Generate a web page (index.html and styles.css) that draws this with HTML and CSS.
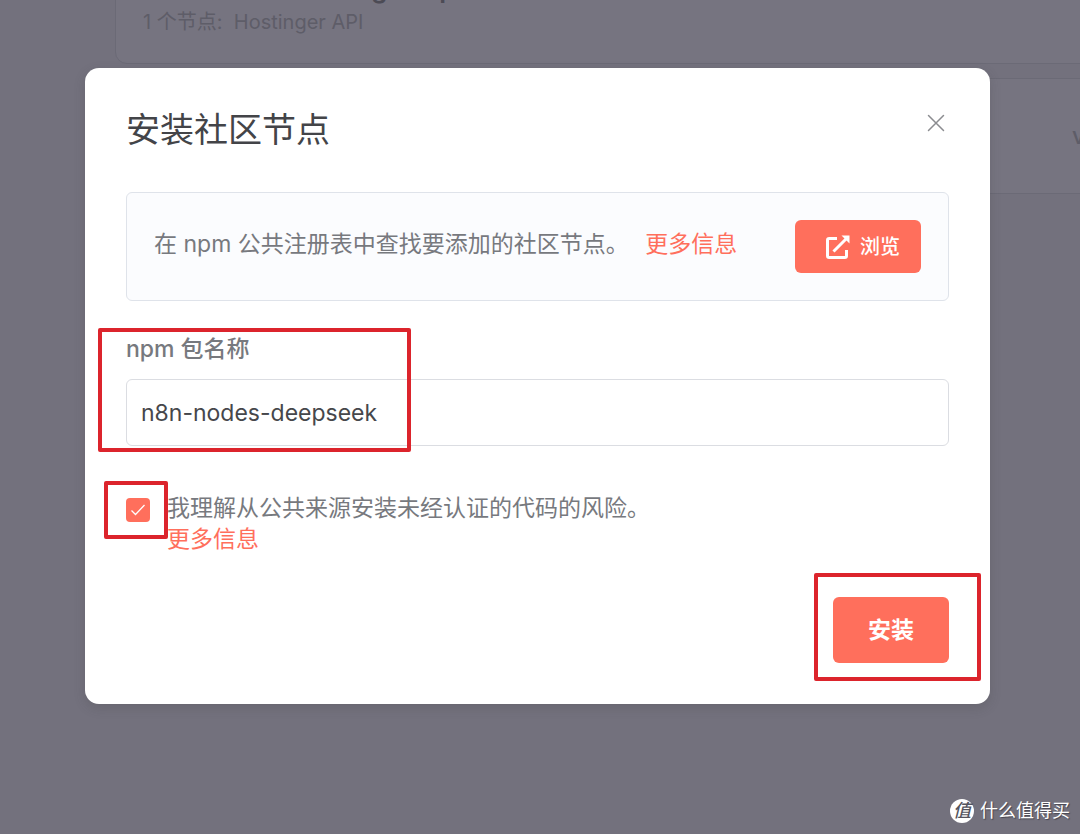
FILE: index.html
```
<!DOCTYPE html>
<html lang="zh-CN">
<head>
    <meta charset="UTF-8">
    <meta name="viewport" content="width=device-width, initial-scale=1.0">
    <title>安装社区节点</title>
    <link rel="stylesheet" href="styles.css">
</head>
<body>
    <!-- Package list behind the dialog -->
    <div class="package-list">
        <div class="package-card">
            <div class="package-info">
                <strong>n8n-nodes-hostinger-api</strong>
                <p>1 个节点:&nbsp; Hostinger API</p>
            </div>
        </div>
        <div class="package-card">
            <span class="version">v1.0.1</span>
        </div>
    </div>

    <div class="overlay">
        <div class="modal" role="dialog" aria-labelledby="modal-title">
            <header class="modal-header">
                <h1 id="modal-title">安装社区节点</h1>
                <button class="close-button" type="button" aria-label="关闭">
                    <svg width="18" height="18" viewBox="0 0 18 18" fill="none" stroke="#8b8c90" stroke-width="1.5" stroke-linecap="round">
                        <path d="M1.5 1.5L16.5 16.5M16.5 1.5L1.5 16.5"/>
                    </svg>
                </button>
            </header>

            <div class="notice">
                <p>在 npm 公共注册表中查找要添加的社区节点。 <a href="#">更多信息</a></p>
                <button class="primary-button browse-button" type="button">
                    <svg width="24" height="24" viewBox="0 0 24 24" fill="none" stroke="#fff" stroke-width="3">
                        <path d="M11 3.5H3.2Q1.5 3.5 1.5 5.2V20.8Q1.5 22.5 3.2 22.5H18.8Q20.5 22.5 20.5 20.8V15"/>
                        <path d="M7.5 16.5L20 4"/>
                        <path d="M15.5 0.5H23.5V8.5Z" fill="#fff" stroke="none"/>
                    </svg>
                    <span>浏览</span>
                </button>
            </div>

            <div class="field">
                <label for="package-name">npm 包名称</label>
                <input id="package-name" type="text" value="n8n-nodes-deepseek">
                <span class="mark mark-field"></span>
            </div>

            <div class="agreement">
                <div class="check-wrap">
                    <input id="agree" type="checkbox" checked>
                    <svg class="tick" width="16" height="14" viewBox="0 0 16 14" fill="none" stroke="#fff" stroke-width="1.3">
                        <path d="M1.5 7.5L5.5 11.5L14.5 2"/>
                    </svg>
                    <span class="mark mark-check"></span>
                </div>
                <div class="agreement-text">
                    <label for="agree">我理解从公共来源安装未经认证的代码的风险。</label>
                    <a href="#">更多信息</a>
                </div>
            </div>

            <footer class="modal-footer">
                <div class="install-wrap">
                    <button class="primary-button install-button" type="button">安装</button>
                    <span class="mark mark-install"></span>
                </div>
            </footer>
        </div>
    </div>

    <div class="watermark">
        <span class="watermark-logo">值</span>
        <span>什么值得买</span>
    </div>
</body>
</html>
```
FILE: styles.css
```
* {
    box-sizing: border-box;
}

body {
    margin: 0;
    min-height: 100vh;
    overflow: hidden;
    background-color: #73717d;
    color: #77797e;
    font-family: Inter, "Noto Sans CJK SC", sans-serif;
    font-size: 23px;
}

h1,
p {
    margin: 0;
}

a {
    color: #ff6f5c;
    text-decoration: none;
}

button,
input {
    margin: 0;
    font-family: inherit;
}

/* Package list */
.package-list {
    display: flex;
    flex-direction: column;
    gap: 14px;
    margin: -52px -40px 0 115px;
}

.package-card {
    display: flex;
    height: 116px;
    padding: 0 27px;
    border: 1px solid #6b6a76;
    border-radius: 12px;
    background-color: #767480;
    color: #5e5d68;
}

.package-info {
    padding-top: 25px;
    font-size: 20px;
    line-height: 30px;
}

.package-info strong {
    display: block;
    color: #4c4b55;
    font-size: 26px;
    font-weight: 600;
}

.package-info p {
    padding-top: 3px;
}

.version {
    align-self: center;
    width: 20px;
    margin-left: auto;
    font-weight: 500;
}

/* Dialog */
.overlay {
    position: absolute;
    inset: 0;
    padding: 68px 90px 0 85px;
}

.modal {
    padding: 38px 41px 41px;
    border-radius: 14px;
    background-color: #fff;
    box-shadow: 0 4px 12px rgba(60, 58, 60, 0.2);
}

.modal-header {
    display: flex;
    justify-content: space-between;
    align-items: flex-start;
    height: 86px;
}

.modal-header h1 {
    color: #434448;
    font-size: 34px;
    font-weight: 400;
    line-height: 48px;
}

.close-button {
    display: flex;
    padding: 8px 4px;
    border: none;
    background: none;
    cursor: pointer;
}

.notice {
    display: flex;
    justify-content: space-between;
    align-items: flex-start;
    padding: 27px;
    border: 1px solid #dfe3ea;
    border-radius: 6px;
    background-color: #fbfcfe;
    line-height: 48px;
}

.notice a {
    margin-left: 10px;
}

.primary-button {
    border: none;
    border-radius: 6px;
    background-color: #ff6f5c;
    color: #fff;
    font-weight: 600;
    cursor: pointer;
}

.browse-button {
    display: flex;
    align-items: center;
    gap: 10px;
    height: 53px;
    padding: 0 21px 0 31px;
    font-size: 20px;
    font-weight: 500;
}

.browse-button span {
    padding-bottom: 2px;
}

.field {
    position: relative;
    margin-top: 32px;
}

.field label {
    display: block;
    margin-bottom: 14px;
    font-weight: 500;
    line-height: 32px;
}

.field input {
    display: block;
    width: 100%;
    height: 67px;
    padding: 0 14px;
    border: 1px solid #dbdde2;
    border-radius: 6px;
    background-color: #fff;
    color: #46474b;
    font-size: 23px;
}

.agreement {
    display: flex;
    gap: 17px;
    margin-top: 46px;
    line-height: 31px;
}

.check-wrap {
    position: relative;
    display: flex;
    width: 24px;
    height: 24px;
    margin-top: 6px;
}

.check-wrap input {
    appearance: none;
    width: 24px;
    height: 24px;
    border-radius: 4px;
    background-color: #ff6f5c;
}

.tick {
    position: absolute;
    top: 5px;
    left: 4px;
    pointer-events: none;
}

.agreement-text {
    padding-top: 1px;
}

.agreement-text label,
.agreement-text a {
    display: block;
}

.modal-footer {
    display: flex;
    justify-content: flex-end;
    margin-top: 42px;
}

.install-wrap {
    position: relative;
}

.install-button {
    display: block;
    height: 66px;
    padding: 0 35px 4px;
    font-size: 23px;
}

/* Red highlight frames */
.mark {
    position: absolute;
    border: 4px solid #dc242c;
    border-radius: 2px;
    pointer-events: none;
}

.mark-field {
    top: -5px;
    left: -28px;
    width: 313px;
    height: 124px;
}

.mark-check {
    inset: -17px -18px;
    left: -22px;
}

.mark-install {
    inset: -24px -32px -18px -19px;
}

.watermark {
    position: absolute;
    right: 10px;
    bottom: 10px;
    display: flex;
    align-items: center;
    gap: 6px;
    color: #fff;
    font-size: 18px;
    line-height: 26px;
    text-shadow: 1px 1px 1px rgba(40, 40, 50, 0.6);
}

.watermark-logo {
    width: 24px;
    height: 24px;
    border-radius: 50%;
    background-color: #fff;
    color: #55545e;
    font-style: italic;
    font-weight: 500;
    line-height: 24px;
    text-align: center;
    text-shadow: none;
}
```
